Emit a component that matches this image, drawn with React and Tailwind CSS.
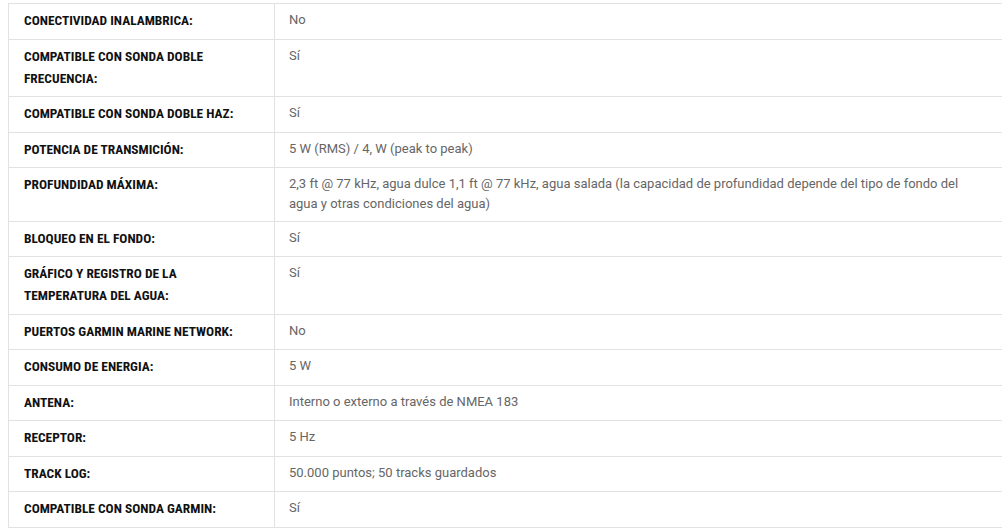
const specs = [
  ["CONECTIVIDAD INALAMBRICA:", "No"],
  ["COMPATIBLE CON SONDA DOBLE FRECUENCIA:", "Sí"],
  ["COMPATIBLE CON SONDA DOBLE HAZ:", "Sí"],
  ["POTENCIA DE TRANSMICIÓN:", "5 W (RMS) / 4, W (peak to peak)"],
  [
    "PROFUNDIDAD MÁXIMA:",
    "2,3 ft @ 77 kHz, agua dulce 1,1 ft @ 77 kHz, agua salada (la capacidad de profundidad depende del tipo de fondo del agua y otras condiciones del agua)",
  ],
  ["BLOQUEO EN EL FONDO:", "Sí"],
  ["GRÁFICO Y REGISTRO DE LA TEMPERATURA DEL AGUA:", "Sí"],
  ["PUERTOS GARMIN MARINE NETWORK:", "No"],
  ["CONSUMO DE ENERGIA:", "5 W"],
  ["ANTENA:", "Interno o externo a través de NMEA 183"],
  ["RECEPTOR:", "5 Hz"],
  ["TRACK LOG:", "50.000 puntos; 50 tracks guardados"],
  ["COMPATIBLE CON SONDA GARMIN:", "Sí"],
];

export default function App() {
  return (
    <div className="w-[1003px] h-[530px] overflow-hidden bg-white pl-2 pt-[3px]">
      <table className="w-[994px] border-collapse table-fixed">
        <colgroup>
          <col className="w-[266px]" />
          <col />
        </colgroup>
        <tbody>
          {specs.map(([label, value]) => (
            <tr key={label} className="border-y border-[#e2e2e2]">
              <td className="border-l border-r border-[#e2e2e2] pl-[15px] pr-7 py-[6.25px] align-top font-[Roboto] [font-stretch:75%] font-bold text-[13.4px] leading-[22px] text-[#111]">
                {label}
              </td>
              <td className="pl-[14px] pr-[22px] py-[6.25px] align-top font-[Roboto] text-[13px] leading-[20px] text-[#666]">
                {value}
              </td>
            </tr>
          ))}
        </tbody>
      </table>
    </div>
  );
}
